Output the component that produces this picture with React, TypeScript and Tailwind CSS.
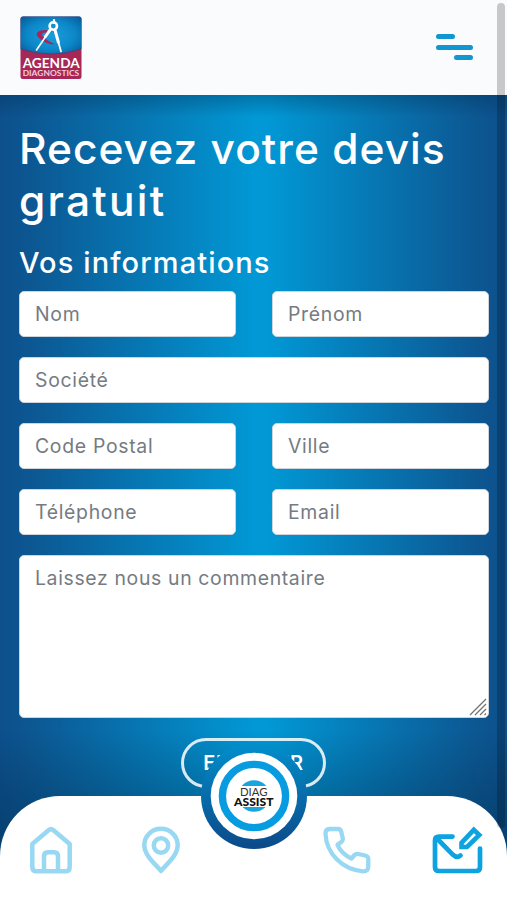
type FieldProps = {
  label: string;
  type?: string;
  customClasses?: string;
};

const Field = ({ label, type = "text", customClasses }: FieldProps) => (
  <input
    type={type}
    placeholder={label}
    aria-label={label}
    className={`h-[46px] w-full min-w-0 rounded-[5px] border border-[#ced4da] bg-white px-[15px] pb-px text-[19.4px] tracking-[0.7px] text-gray-800 placeholder:text-[#757b81] focus:outline-none ${
      customClasses || ""
    }`}
  />
);

const Logo = () => (
  <svg
    viewBox="0 0 62 63"
    className="h-[63px] w-[62px]"
    role="img"
    aria-label="Agenda Diagnostics">
    <defs>
      <radialGradient id="logoSky" cx="50%" cy="50%" r="65%">
        <stop offset="0" stopColor="#1b9ddb" />
        <stop offset="0.6" stopColor="#0c88c8" />
        <stop offset="1" stopColor="#06609f" />
      </radialGradient>
    </defs>
    <rect x="0.5" y="0.5" width="61" height="62.500" rx="2.5" fill="#a72757" />
    <path
      d="M0.500 3Q0.500 0.500 3 0.500H59Q61.500 0.500 61.500 3V33Q31 43 0.500 33Z"
      fill="url(#logoSky)"
    />
    <path d="M1 33Q31 43 61 33" fill="none" stroke="#5d3470" strokeWidth="0.8" />
    <path
      d="M27 14.500C17 14 14.500 18 20 22.500C24 26 29 28 33.500 28C27 25 21.500 21 21.500 18.300C21.500 16.500 24 16 27 16.300Z"
      fill="#a92458"
      stroke="#a92458"
      strokeWidth="0.8"
    />
    {/* Compass */}
    <g fill="none" stroke="#fff" strokeLinecap="round">
      <path d="M34 4V7" strokeWidth="2.2" />
      <circle cx="33.300" cy="10" r="3.700" strokeWidth="2.6" />
      <path d="M30.500 13.500L16.500 34" strokeWidth="1.6" />
      <path d="M30 14L25.500 20.500" strokeWidth="3" />
      <path d="M35 14L41 35.500" strokeWidth="1.8" />
      <path d="M35 14L38.300 26" strokeWidth="3" />
    </g>
    <text
      x="2.7"
      y="52"
      textLength="57"
      lengthAdjust="spacingAndGlyphs"
      fill="#fff"
      className="font-['Lato',sans-serif] text-[13px] font-bold">
      AGENDA
    </text>
    <text
      x="2.7"
      y="59.5"
      textLength="56.5"
      lengthAdjust="spacingAndGlyphs"
      fill="#f3ccda"
      className="font-['Lato',sans-serif] text-[7.6px] font-bold">
      DIAGNOSTICS
    </text>
  </svg>
);

const MenuIcon = () => (
  <span className="flex w-[37px] flex-col">
    <span className="h-[5px] w-[19px] rounded-full bg-[#1296cf]" />
    <span className="mt-[6px] h-[5px] w-[37px] rounded-full bg-[#1296cf]" />
    <span className="mt-[5px] h-[5px] w-[19px] self-end rounded-full bg-[#1296cf]" />
  </span>
);

const HomeIcon = () => (
  <svg viewBox="0 0 42 48" className="h-[48px] w-[42px]">
    <path
      d="M2.300 18L18.500 4.200Q21 2 23.500 4.200L39.700 18V41Q39.700 45.300 35.500 45.300H6.500Q2.300 45.300 2.300 41ZM14 45V30.500Q14 26.300 18 26.300H24Q28 26.300 28 30.500V45"
      fill="none"
      stroke="currentColor"
      strokeWidth="4.5"
      strokeLinejoin="round"
    />
  </svg>
);

const PinIcon = () => (
  <svg viewBox="0 0 38 48" className="h-[48px] w-[38px]">
    <g fill="none" stroke="currentColor" strokeWidth="4.5" strokeLinejoin="round">
      <path d="M19 45C14 38.500 2.300 30 2.300 19A16.700 16.200 0 0 1 35.700 19C35.700 30 24 38.500 19 45Z" />
      <circle cx="19" cy="19.500" r="7.200" />
    </g>
  </svg>
);

const PhoneIcon = () => (
  <svg viewBox="0 0 48 48" className="h-[48px] w-[48px]">
    <path
      d="M6.500 3H15Q17.500 3 18.200 5.500L19.700 12Q20.200 14.500 18.300 16L14.500 18.800C17 24.500 22 29.500 28.500 32.500L31.500 29Q33 27.500 35.500 28L42 29.500Q45.300 30.300 45.300 33V40.500Q45.300 45.500 40 45.300C19 43.500 3.500 27.500 2.500 8Q2.500 3 6.500 3Z"
      fill="none"
      stroke="currentColor"
      strokeWidth="4.3"
      strokeLinejoin="round"
    />
  </svg>
);

const MailEditIcon = () => (
  <svg viewBox="0 0 51 48" className="h-[48px] w-[51px]">
    <g
      fill="none"
      stroke="currentColor"
      strokeWidth="4.700"
      strokeLinecap="round"
      strokeLinejoin="round">
      <path d="M20.500 10.600H7Q3 10.600 3 14.600V41Q3 45 7 45H44Q48 45 48 41V22.500" />
      <path d="M5 12.500L21 28.800Q25 32.500 28.500 29.500" />
      <path
        d="M29.500 16.800L41.800 3.800L47.300 9L35 21H29.500Z"
        strokeLinejoin="miter"
        strokeWidth="4.6"
      />
    </g>
  </svg>
);

const AssistBadge = () => (
  <button
    aria-label="Diag Assist"
    className="absolute left-[201px] top-[-53px] size-[106px] rounded-full bg-linear-to-b from-[#018fcc] to-[#0b4a89]">
    <svg viewBox="0 0 106 106" className="size-full">
      <circle cx="53" cy="53" r="43.300" fill="#fff" />
      <circle cx="53" cy="53" r="31.600" fill="none" stroke="#079be0" strokeWidth="7.400" />
      <circle cx="53" cy="53" r="15.800" fill="#1ba5df" />
      <rect x="34" y="43" width="38" height="21" fill="#fff" />
      <text
        x="39"
        y="53"
        textLength="27.500"
        lengthAdjust="spacingAndGlyphs"
        fill="#333"
        className="font-['Lato',sans-serif] text-[11.5px]">
        DIAG
      </text>
      <text
        x="33"
        y="62.700"
        textLength="39.500"
        lengthAdjust="spacingAndGlyphs"
        fill="#111"
        className="font-['Lato',sans-serif] text-[11.5px] font-black">
        ASSIST
      </text>
    </svg>
  </button>
);

const BottomNav = () => (
  <nav className="absolute inset-x-0 bottom-0 h-[104px] rounded-t-[60px] bg-white text-[#98d8f2]">
    <div className="flex items-start pl-[30px] pt-[30px]">
      <a href="#accueil" aria-label="Accueil">
        <HomeIcon />
      </a>
      <a href="#agences" aria-label="Agences" className="ml-[70px]">
        <PinIcon />
      </a>
      <a href="#telephone" aria-label="Téléphone" className="ml-[143px]">
        <PhoneIcon />
      </a>
      <a href="#devis" aria-label="Devis" className="ml-[61px] text-[#0da2e0]">
        <MailEditIcon />
      </a>
    </div>
    <AssistBadge />
  </nav>
);

const ResizeGrip = () => (
  <svg
    viewBox="0 0 18 18"
    className="pointer-events-none absolute bottom-[2px] right-[2px] size-[18px]"
    aria-hidden="true">
    <path
      d="M1 17L17 1M6 17L17 6M11 17L17 11M15.500 17L17 15.500"
      stroke="#747474"
      strokeWidth="1.300"
    />
  </svg>
);

const QuoteForm = () => (
  <form className="flex flex-col px-[19px] pt-[28px]">
    <h1 className="whitespace-nowrap text-[42.5px] font-medium leading-[52px] text-white">
      <span className="block tracking-[1px]">Recevez votre devis</span>
      <span className="block tracking-[2.2px]">gratuit</span>
    </h1>
    <h2 className="mt-[18px] h-[46px] text-[29px] font-medium leading-[36px] tracking-[1.1px] text-white">
      Vos informations
    </h2>
    <div className="grid w-[470px] grid-cols-2 gap-x-[36px] gap-y-[20px]">
      <Field label="Nom" />
      <Field label="Prénom" />
      <Field label="Société" customClasses="col-span-2" />
      <Field label="Code Postal" />
      <Field label="Ville" />
      <Field label="Téléphone" type="tel" />
      <Field label="Email" type="email" />
      <div className="relative col-span-2 h-[163px]">
        <textarea
          placeholder="Laissez nous un commentaire"
          aria-label="Laissez nous un commentaire"
          className="h-full w-full resize-none rounded-[5px] border border-[#ced4da] bg-white px-[15px] py-[8px] text-[19.4px] leading-[28px] tracking-[0.66px] placeholder:text-[#757b81] focus:outline-none"
        />
        <ResizeGrip />
      </div>
    </div>
    <button
      type="button"
      className="mt-[20px] h-[50px] w-[145px] self-center rounded-full border-[3px] border-white/85 text-[20px] font-semibold tracking-[0.8px] text-white">
      ENVOYER
    </button>
  </form>
);

const App = () => (
  <div className="relative flex h-[900px] w-[507px] flex-col overflow-hidden bg-white font-['Inter','Liberation_Sans',sans-serif]">
    <header className="flex h-[95px] shrink-0 items-start justify-between bg-[#f9fbfd] pl-[20px] pr-[34px] pt-[16px]">
      <Logo />
      <button aria-label="Menu" className="mt-[18px]">
        <MenuIcon />
      </button>
    </header>
    <main className="relative flex-1 bg-[linear-gradient(90deg,#0c508c_0%,#0c5792_6%,#0198d5_50%,#0198d5_53%,#0c5792_94%,#0c508c_100%)]">
      <div className="pointer-events-none absolute inset-0 bg-[linear-gradient(180deg,rgba(0,45,80,0.32)_0px,rgba(0,45,80,0)_22px,rgba(0,45,80,0)_635px,rgba(0,45,80,0.3)_700px,rgba(0,45,80,0.45)_750px)]" />
      <div className="relative">
        <QuoteForm />
      </div>
    </main>
    <BottomNav />
    {/* Scroll thumb laid over the page */}
    <div className="pointer-events-none absolute right-[2px] top-[3px] h-[825px] w-[8px] rounded-full bg-black/20" />
  </div>
);

export default App;
